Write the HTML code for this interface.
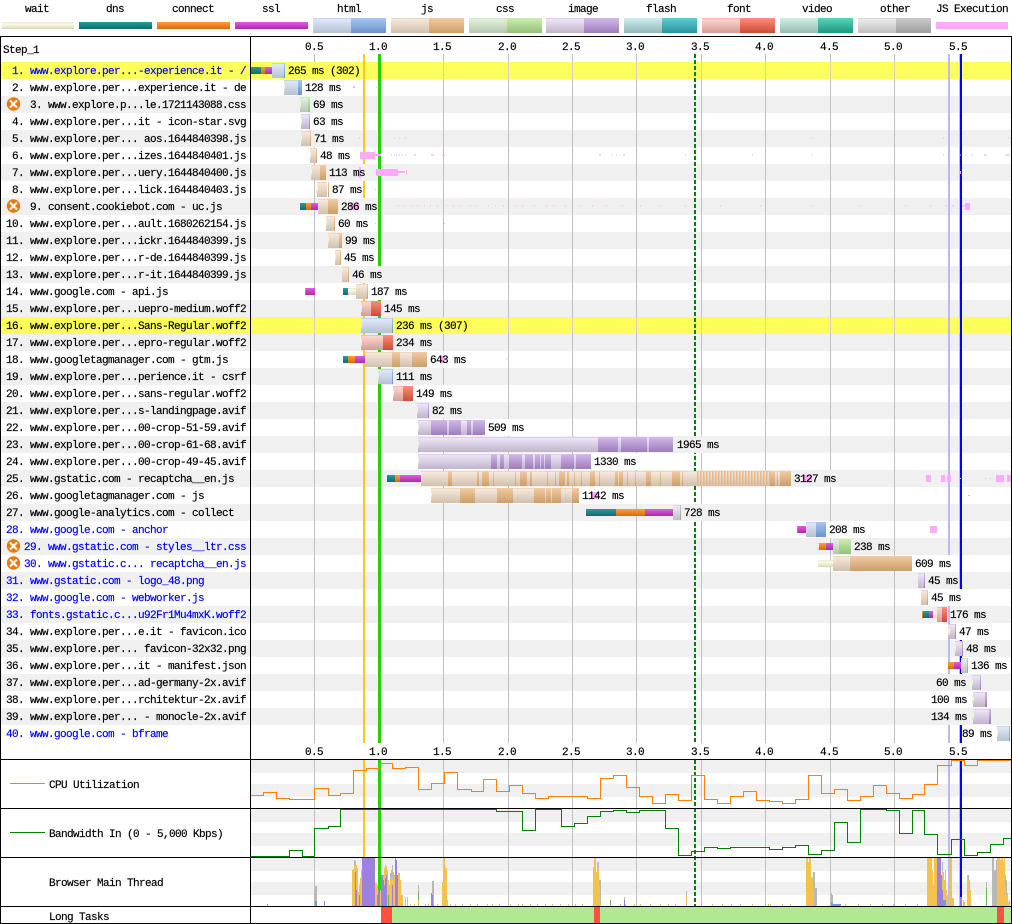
<!DOCTYPE html>
<html><head><meta charset="utf-8"><title>Waterfall</title>
<style>
html,body{margin:0;padding:0;background:#fff}
svg{display:block}
text{font-family:"Liberation Mono",monospace;font-size:11px;letter-spacing:-.6px;fill:#000;stroke:#000;stroke-width:.18px}
text.u{fill:#0000ff;stroke:#0000ff}
rect,path,polyline{shape-rendering:crispEdges}
.b{y:1px;height:15px}
.t{y:5px;height:7px}
.hl{fill:url(#hl)}.hd{fill:url(#hd)}.jl{fill:url(#jl)}.jd{fill:url(#jd)}.cl{fill:url(#cl)}.cd{fill:url(#cd)}
.il{fill:url(#il)}.id{fill:url(#id)}.fl{fill:url(#fl)}.fd{fill:url(#fd)}.ol{fill:url(#ol)}.od{fill:url(#od)}
.w{fill:url(#w)}.n{fill:url(#n)}.k{fill:url(#k)}.s{fill:url(#s)}
.lg{fill:#f0f0f0;y:0;height:17px}.lw{fill:#fff;y:0;height:17px}.ly{fill:#ffff5c;y:0;height:17px}
.p{fill:#ffaaf9}
.x{stroke:#fff;stroke-width:2;shape-rendering:auto}
</style></head><body>
<svg xmlns="http://www.w3.org/2000/svg" width="1012" height="924" viewBox="0 0 1012 924">
<defs>
<linearGradient id="w" x1="0" y1="0" x2="0" y2="1"><stop offset="0" stop-color="#e8e8c8"/><stop offset=".3" stop-color="#fbfbe6"/><stop offset="1" stop-color="#d8d8b8"/></linearGradient>
<linearGradient id="n" x1="0" y1="0" x2="0" y2="1"><stop offset="0" stop-color="#2a9a9c"/><stop offset="1" stop-color="#136a6c"/></linearGradient>
<linearGradient id="k" x1="0" y1="0" x2="0" y2="1"><stop offset="0" stop-color="#ff9c3a"/><stop offset="1" stop-color="#d76a0c"/></linearGradient>
<linearGradient id="s" x1="0" y1="0" x2="0" y2="1"><stop offset="0" stop-color="#e05ce0"/><stop offset="1" stop-color="#a82ca8"/></linearGradient>
<linearGradient id="hl" x1="0" y1="0" x2="0" y2="1"><stop offset="0" stop-color="#a9c4ea"/><stop offset=".07" stop-color="#dfe8f6"/><stop offset="1" stop-color="#b5c1d2"/></linearGradient>
<linearGradient id="hd" x1="0" y1="0" x2="0" y2="1"><stop offset="0" stop-color="#a8c6f0"/><stop offset="1" stop-color="#6d92c8"/></linearGradient>
<linearGradient id="jl" x1="0" y1="0" x2="0" y2="1"><stop offset="0" stop-color="#e8c8a0"/><stop offset=".07" stop-color="#f6e8da"/><stop offset="1" stop-color="#d2c0ae"/></linearGradient>
<linearGradient id="jd" x1="0" y1="0" x2="0" y2="1"><stop offset="0" stop-color="#f2cba2"/><stop offset="1" stop-color="#cd9d68"/></linearGradient>
<linearGradient id="cl" x1="0" y1="0" x2="0" y2="1"><stop offset="0" stop-color="#c0e4a8"/><stop offset=".07" stop-color="#e0f0dc"/><stop offset="1" stop-color="#b5c8b0"/></linearGradient>
<linearGradient id="cd" x1="0" y1="0" x2="0" y2="1"><stop offset="0" stop-color="#cceeb0"/><stop offset="1" stop-color="#92c076"/></linearGradient>
<linearGradient id="il" x1="0" y1="0" x2="0" y2="1"><stop offset="0" stop-color="#cdb5e8"/><stop offset=".07" stop-color="#eee5f7"/><stop offset="1" stop-color="#c0b4ca"/></linearGradient>
<linearGradient id="id" x1="0" y1="0" x2="0" y2="1"><stop offset="0" stop-color="#d2b8ec"/><stop offset="1" stop-color="#9c7cba"/></linearGradient>
<linearGradient id="fl" x1="0" y1="0" x2="0" y2="1"><stop offset="0" stop-color="#ff9c8c"/><stop offset=".07" stop-color="#ffd6cf"/><stop offset="1" stop-color="#d29e95"/></linearGradient>
<linearGradient id="fd" x1="0" y1="0" x2="0" y2="1"><stop offset="0" stop-color="#ff8e7a"/><stop offset="1" stop-color="#cb4a35"/></linearGradient>
<linearGradient id="ol" x1="0" y1="0" x2="0" y2="1"><stop offset="0" stop-color="#c8c8c8"/><stop offset=".07" stop-color="#ececec"/><stop offset="1" stop-color="#bebebe"/></linearGradient>
<linearGradient id="od" x1="0" y1="0" x2="0" y2="1"><stop offset="0" stop-color="#cacaca"/><stop offset="1" stop-color="#9e9e9e"/></linearGradient>
<linearGradient id="vl" x1="0" y1="0" x2="0" y2="1"><stop offset="0" stop-color="#cdeee6"/><stop offset="1" stop-color="#96bcb3"/></linearGradient>
<linearGradient id="vd" x1="0" y1="0" x2="0" y2="1"><stop offset="0" stop-color="#5ed2b6"/><stop offset="1" stop-color="#179880"/></linearGradient>
<linearGradient id="gl" x1="0" y1="0" x2="0" y2="1"><stop offset="0" stop-color="#cdeef0"/><stop offset="1" stop-color="#93b8b8"/></linearGradient>
<linearGradient id="gd" x1="0" y1="0" x2="0" y2="1"><stop offset="0" stop-color="#66ccd2"/><stop offset="1" stop-color="#27929f"/></linearGradient>
<pattern id="st" x="697" y="0" width="3" height="20" patternUnits="userSpaceOnUse"><rect width="1.5" height="20" fill="#e3b98c"/></pattern>
</defs>

<!-- legend -->
<g text-anchor="middle">
<text x="37" y="12" text-anchor="middle">wait</text><text x="115" y="12" text-anchor="middle">dns</text><text x="193" y="12" text-anchor="middle">connect</text><text x="271" y="12" text-anchor="middle">ssl</text><text x="349" y="12" text-anchor="middle">html</text><text x="427" y="12" text-anchor="middle">js</text><text x="505" y="12" text-anchor="middle">css</text><text x="583" y="12" text-anchor="middle">image</text><text x="661" y="12" text-anchor="middle">flash</text><text x="739" y="12" text-anchor="middle">font</text><text x="817" y="12" text-anchor="middle">video</text><text x="895" y="12" text-anchor="middle">other</text><text x="972" y="12" text-anchor="middle">JS Execution</text>
</g>
<rect x="2" y="22" width="72" height="7" fill="url(#w)"/>
<rect x="79" y="22" width="73" height="7" fill="url(#n)"/>
<rect x="157" y="22" width="73" height="7" fill="url(#k)"/>
<rect x="235" y="22" width="73" height="7" fill="url(#s)"/>
<rect x="313" y="18" width="38" height="15" fill="url(#hl)"/><rect x="351" y="18" width="35" height="15" fill="url(#hd)"/>
<rect x="391" y="18" width="38" height="15" fill="url(#jl)"/><rect x="429" y="18" width="35" height="15" fill="url(#jd)"/>
<rect x="469" y="18" width="38" height="15" fill="url(#cl)"/><rect x="507" y="18" width="35" height="15" fill="url(#cd)"/>
<rect x="546" y="18" width="38" height="15" fill="url(#il)"/><rect x="584" y="18" width="35" height="15" fill="url(#id)"/>
<rect x="624" y="18" width="38" height="15" fill="url(#gl)"/><rect x="662" y="18" width="35" height="15" fill="url(#gd)"/>
<rect x="702" y="18" width="38" height="15" fill="url(#fl)"/><rect x="740" y="18" width="35" height="15" fill="url(#fd)"/>
<rect x="780" y="18" width="38" height="15" fill="url(#vl)"/><rect x="818" y="18" width="35" height="15" fill="url(#vd)"/>
<rect x="858" y="18" width="38" height="15" fill="url(#ol)"/><rect x="896" y="18" width="35" height="15" fill="url(#od)"/>
<rect x="936" y="22" width="72" height="7" fill="#ffaaf9"/>

<!-- row backgrounds -->
<g fill="#f0f0f0">
<rect x="1" y="96" width="1010" height="17"/><rect x="1" y="130" width="1010" height="17"/><rect x="1" y="164" width="1010" height="17"/><rect x="1" y="198" width="1010" height="17"/><rect x="1" y="232" width="1010" height="17"/><rect x="1" y="266" width="1010" height="17"/><rect x="1" y="300" width="1010" height="17"/><rect x="1" y="334" width="1010" height="17"/><rect x="1" y="368" width="1010" height="17"/><rect x="1" y="402" width="1010" height="17"/><rect x="1" y="436" width="1010" height="17"/><rect x="1" y="470" width="1010" height="17"/><rect x="1" y="504" width="1010" height="17"/><rect x="1" y="538" width="1010" height="17"/><rect x="1" y="572" width="1010" height="17"/><rect x="1" y="606" width="1010" height="17"/><rect x="1" y="640" width="1010" height="17"/><rect x="1" y="674" width="1010" height="17"/><rect x="1" y="708" width="1010" height="17"/>
</g>
<rect x="1" y="62" width="1010" height="17" fill="#ffff5c"/><rect x="1" y="317" width="1010" height="17" fill="#ffff5c"/>

<!-- chart stripes -->
<g fill="#f0f0f0">
<rect x="251" y="760" width="760" height="13"/><rect x="251" y="784" width="760" height="13"/>
<rect x="251" y="809" width="760" height="13"/><rect x="251" y="833" width="760" height="13"/>
<rect x="251" y="858" width="760" height="13"/><rect x="251" y="882" width="760" height="13"/>
</g>

<!-- grid -->
<path fill="none" stroke="#c0c0c0" d="M314.5 54V743M379.5 54V743M443.5 54V743M508.5 54V743M572.5 54V743M636.5 54V743M701.5 54V743M765.5 54V743M830.5 54V743M894.5 54V743M959.5 54V743M314.5 760V906M379.5 760V906M443.5 760V906M508.5 760V906M572.5 760V906M636.5 760V906M701.5 760V906M765.5 760V906M830.5 760V906M894.5 760V906M959.5 760V906"/>
<path fill="none" stroke="#d4d4c4" d="M314.5 62v17M443.5 62v17M508.5 62v17M572.5 62v17M636.5 62v17M701.5 62v17M765.5 62v17M830.5 62v17M894.5 62v17M959.5 62v17M314.5 317v17M443.5 317v17M508.5 317v17M572.5 317v17M636.5 317v17M701.5 317v17M765.5 317v17M830.5 317v17M894.5 317v17M959.5 317v17"/>

<!-- marks -->
<g>
<rect x="363" y="54" width="2" height="689" fill="#ffc61e"/><rect x="363" y="760" width="2" height="146" fill="#ffc61e"/>
<rect x="378" y="54" width="3" height="689" fill="#28d000"/><rect x="378" y="760" width="3" height="146" fill="#28d000"/>
<rect x="948" y="54" width="2" height="689" fill="#b9b9f5"/><rect x="948" y="760" width="2" height="146" fill="#b9b9f5"/>
<rect x="960" y="54" width="2" height="689" fill="#0000ff"/><rect x="960" y="760" width="2" height="146" fill="#0000ff"/>
<path d="M695 54V743M695 760V906" stroke="#008000" stroke-width="2" stroke-dasharray="4 2" fill="none"/>
</g>

<!-- rows -->
<g transform="translate(0,62)"><rect class="t n" x="251" width="10"/><rect class="t k" x="261" width="4"/><rect class="t s" x="265" width="8"/><rect class="b hl" x="272" width="12"/><rect class="b hd" x="284" width="1"/><rect class="ly" x="288" width="72"/><text x="288" y="12">265 ms (302)</text></g>
<g transform="translate(0,79)"><rect class="b hl" x="284" width="14"/><rect class="b hd" x="298" width="4"/><rect class="t w" x="284" width="1"/><rect class="lw" x="305" width="37"/><text x="305" y="12">128 ms</text><rect class="p" x="353" y="7" width="2" height="2"/><rect class="p" x="376" y="8" width="1" height="1"/></g>
<g transform="translate(0,96)"><rect class="b cl" x="300" width="8"/><rect class="b cd" x="308" width="2"/><rect class="t w" x="300" width="1"/><rect class="lg" x="313" width="31"/><text x="313" y="12">69 ms</text></g>
<g transform="translate(0,113)"><rect class="b il" x="301" width="8"/><rect class="b id" x="309" width="1"/><rect class="t w" x="301" width="1"/><rect class="lw" x="313" width="31"/><text x="313" y="12">63 ms</text></g>
<g transform="translate(0,130)"><rect class="b jl" x="301" width="9"/><rect class="b jd" x="310" width="1"/><rect class="t w" x="301" width="1"/><rect class="lg" x="314" width="31"/><text x="314" y="12">71 ms</text><path stroke="#ffaaf9" d="M359 8h1M394 8h1M399 8h1M405 8h1M443 8h1M811 8h1M943 8h1M1008 8h1"/></g>
<g transform="translate(0,147)"><rect class="b jl" x="310" width="6"/><rect class="b jd" x="316" width="1"/><rect class="t w" x="310" width="1"/><rect class="lw" x="320" width="31"/><text x="320" y="12">48 ms</text><rect class="p" x="360" y="5" width="15" height="7"/><rect class="p" x="375" y="7" width="6" height="2"/><path stroke="#ffaaf9" d="M391 8h1M394 8h1M396 8h1M399 8h1M402 8h1M405 8h1M414 8h2M431 8h3M442 8h3M508 8h1M599 8h2M611 8h1M616 8h1M623 8h2M685 8h1M752 8h1M811 8h1M943 8h1M949 8h1M959 8h2M965 8h1M972 8h1M984 8h3M1005 8h5"/></g>
<g transform="translate(0,164)"><rect class="b jl" x="311" width="9"/><rect class="b jd" x="320" width="6"/><rect class="t w" x="311" width="1"/><rect class="lg" x="329" width="37"/><rect class="p" x="359" y="3" width="2" height="11"/><text x="329" y="12">113 ms</text><rect class="p" x="376" y="5" width="22" height="7"/><rect class="p" x="398" y="7" width="7" height="2"/><rect class="p" x="406" y="6" width="1" height="5"/><rect class="p" x="960" y="7" width="1" height="3"/></g>
<g transform="translate(0,181)"><rect class="b jl" x="317" width="10"/><rect class="b jd" x="328" width="1"/><rect class="t w" x="316" width="2"/><rect class="lw" x="332" width="31"/><text x="332" y="12">87 ms</text><rect class="p" x="375" y="8" width="1" height="1"/></g>
<g transform="translate(0,198)"><rect class="t n" x="300" width="6"/><rect class="t k" x="306" width="5"/><rect class="t s" x="311" width="8"/><rect class="b jl" x="318" width="10"/><rect class="b jd" x="328" width="10"/><rect class="lg" x="341" width="37"/><rect class="p" x="350" y="5" width="9" height="7"/><text x="341" y="12">286 ms</text><path stroke="#ffaaf9" d="M398 8h1M404 8h1M411 8h1M417 8h1M424 8h1M430 8h1M437 8h1M446 8h1M453 8h1M459 8h1M470 8h1M476 8h1M488 8h1M495 8h1M503 8h1M515 8h1M522 8h1M534 8h1M546 8h1M553 8h1M565 8h1M580 8h1M592 8h1M606 8h1M622 8h1M640 8h1M660 8h1M685 8h1M720 8h1M760 8h1M811 8h1M860 8h1M905 8h1M930 8h1M945 8h2M952 8h2M962 8h6"/><rect class="p" x="965" y="5" width="5" height="7"/></g>
<g transform="translate(0,215)"><rect class="b jl" x="326" width="8"/><rect class="b jd" x="334" width="1"/><rect class="t w" x="326" width="1"/><rect class="lw" x="338" width="31"/><text x="338" y="12">60 ms</text><rect class="p" x="375" y="8" width="1" height="1"/><rect class="p" x="444" y="8" width="1" height="1"/></g>
<g transform="translate(0,232)"><rect class="b jl" x="328" width="11"/><rect class="b jd" x="339" width="3"/><rect class="t w" x="328" width="1"/><rect class="lg" x="345" width="31"/><text x="345" y="12">99 ms</text></g>
<g transform="translate(0,249)"><rect class="b jl" x="335" width="5"/><rect class="b jd" x="340" width="1"/><rect class="t w" x="335" width="1"/><rect class="lw" x="344" width="31"/><text x="344" y="12">45 ms</text></g>
<g transform="translate(0,266)"><rect class="b jl" x="342" width="6"/><rect class="b jd" x="348" width="1"/><rect class="lg" x="352" width="31"/><text x="352" y="12">46 ms</text></g>
<g transform="translate(0,283)"><rect class="t k" x="305" width="1"/><rect class="t s" x="306" width="9"/><rect class="t n" x="343" width="5"/><rect class="t w" x="348" width="9"/><rect class="b jl" x="356" width="11"/><rect class="b jd" x="367" width="1"/><rect class="lw" x="371" width="37"/><text x="371" y="12">187 ms</text></g>
<g transform="translate(0,300)"><rect class="b fl" x="361" width="10"/><rect class="b fd" x="371" width="10"/><rect class="t w" x="361" width="1"/><rect class="lg" x="384" width="37"/><text x="384" y="12">145 ms</text></g>
<g transform="translate(0,317)"><rect class="b hl" x="361" width="31"/><rect class="b hd" x="392" width="1"/><rect class="t w" x="361" width="1"/><rect class="ly" x="396" width="73"/><text x="396" y="12">236 ms (307)</text></g>
<g transform="translate(0,334)"><rect class="b fl" x="361" width="22"/><rect class="b fd" x="383" width="10"/><rect class="t w" x="361" width="1"/><rect class="lg" x="396" width="37"/><text x="396" y="12">234 ms</text></g>
<g transform="translate(0,351)"><rect class="t n" x="343" width="5"/><rect class="t k" x="348" width="7"/><rect class="t s" x="355" width="11"/><rect class="b jl" x="365" width="27"/><rect class="b jd" x="392" width="8"/><rect class="b jl" x="400" width="12"/><rect class="b jd" x="412" width="15"/><rect class="lw" x="430" width="37"/><rect class="p" x="441" y="5" width="4" height="7"/><text x="430" y="12">643 ms</text><rect class="p" x="506" y="8" width="1" height="1"/></g>
<g transform="translate(0,368)"><rect class="b hl" x="378" width="14"/><rect class="b hd" x="392" width="1"/><rect class="t w" x="378" width="1"/><rect class="lg" x="396" width="37"/><text x="396" y="12">111 ms</text></g>
<g transform="translate(0,385)"><rect class="b fl" x="393" width="10"/><rect class="b fd" x="403" width="10"/><rect class="t w" x="393" width="1"/><rect class="lw" x="416" width="37"/><text x="416" y="12">149 ms</text></g>
<g transform="translate(0,402)"><rect class="b il" x="417" width="11"/><rect class="b id" x="428" width="1"/><rect class="t w" x="417" width="1"/><rect class="lg" x="432" width="31"/><text x="432" y="12">82 ms</text></g>
<g transform="translate(0,419)"><rect class="b il" x="418" width="67"/><rect class="b id" x="431" width="16"/><rect class="b id" x="449" width="12"/><rect class="b id" x="467" width="4"/><rect class="b id" x="473" width="12"/><rect class="t w" x="418" width="1"/><rect class="lw" x="488" width="37"/><text x="488" y="12">509 ms</text></g>
<g transform="translate(0,436)"><rect class="b il" x="418" width="255"/><rect class="b id" x="598" width="20"/><rect class="b id" x="621" width="26"/><rect class="b id" x="649" width="24"/><rect class="t w" x="418" width="1"/><rect class="lg" x="677" width="43"/><text x="677" y="12">1965 ms</text></g>
<g transform="translate(0,453)"><rect class="b il" x="418" width="173"/><rect class="b id" x="491" width="6"/><rect class="b id" x="500" width="4"/><rect class="b id" x="509" width="13"/><rect class="b id" x="525" width="8"/><rect class="b id" x="535" width="5"/><rect class="b id" x="541" width="3"/><rect class="b id" x="545" width="6"/><rect class="b id" x="561" width="13"/><rect class="b id" x="576" width="15"/><rect class="t w" x="418" width="1"/><rect class="lw" x="594" width="43"/><text x="594" y="12">1330 ms</text></g>
<g transform="translate(0,470)"><rect class="t n" x="387" width="8"/><rect class="t k" x="395" width="5"/><rect class="t s" x="400" width="22"/><rect class="b jl" x="421" width="370"/><rect class="b jd" x="448" width="4"/><rect class="b jd" x="477" width="2"/><rect class="b jd" x="482" width="7"/><rect class="b jd" x="493" width="1"/><rect class="b jd" x="515" width="1"/><rect class="b jd" x="520" width="7"/><rect class="b jd" x="530" width="2"/><rect class="b jd" x="547" width="1"/><rect class="b jd" x="555" width="1"/><rect class="b jd" x="559" width="6"/><rect class="b jd" x="567" width="2"/><rect class="b jd" x="574" width="1"/><rect class="b jd" x="581" width="1"/><rect class="b jd" x="590" width="5"/><rect class="b jd" x="599" width="1"/><rect class="b jd" x="615" width="3"/><rect class="b jd" x="619" width="4"/><rect class="b jd" x="627" width="1"/><rect class="b jd" x="635" width="1"/><rect class="b jd" x="646" width="5"/><rect class="b jd" x="660" width="1"/><rect class="b jd" x="672" width="8"/><rect class="b jd" x="682" width="1"/><rect class="b" x="697" width="73" fill="url(#st)" style="transform:translate(0,0)"/><rect class="b jd" x="770" width="5"/><rect class="b jd" x="777" width="1"/><rect class="b jd" x="780" width="11"/><rect class="lg" x="794" width="43"/><rect class="p" x="803" y="5" width="9" height="7"/><text x="794" y="12">3127 ms</text><rect class="p" x="926" y="5" width="5" height="7"/><rect class="p" x="941" y="5" width="4" height="7"/><rect class="p" x="947" y="5" width="4" height="7"/><rect class="p" x="960" y="8" width="1" height="1"/><rect class="p" x="985" y="8" width="1" height="1"/><rect class="p" x="990" y="8" width="1" height="1"/><rect class="p" x="996" y="5" width="8" height="7"/><rect class="p" x="1007" y="5" width="4" height="7"/></g>
<g transform="translate(0,487)"><rect class="b jl" x="431" width="148"/><rect class="b jd" x="460" width="15"/><rect class="b jd" x="497" width="16"/><rect class="b jd" x="534" width="11"/><rect class="b jd" x="546" width="5"/><rect class="b jd" x="552" width="9"/><rect class="b jd" x="572" width="7"/><rect class="t w" x="431" width="1"/><rect class="lw" x="582" width="43"/><rect class="p" x="591" y="5" width="8" height="7"/><text x="582" y="12">1142 ms</text><rect class="p" x="968" y="8" width="2" height="1"/></g>
<g transform="translate(0,504)"><rect class="t n" x="586" width="30"/><rect class="t k" x="616" width="29"/><rect class="t s" x="645" width="28"/><rect class="b ol" x="673" width="7"/><rect class="b od" x="680" width="1"/><rect class="lg" x="684" width="37"/><text x="684" y="12">728 ms</text></g>
<g transform="translate(0,521)"><rect class="t k" x="797" width="1"/><rect class="t s" x="798" width="8"/><rect class="b hl" x="806" width="10"/><rect class="b hd" x="816" width="10"/><rect class="lw" x="829" width="37"/><text x="829" y="12">208 ms</text><rect class="p" x="930" y="5" width="7" height="7"/></g>
<g transform="translate(0,538)"><rect class="t w" x="817" width="2"/><rect class="t k" x="819" width="7"/><rect class="t s" x="826" width="8"/><rect class="b cl" x="833" width="6"/><rect class="b cd" x="839" width="12"/><rect class="lg" x="854" width="37"/><text x="854" y="12">238 ms</text></g>
<g transform="translate(0,555)"><rect class="t w" x="818" width="16"/><rect class="b jl" x="833" width="17"/><rect class="b jd" x="850" width="62"/><rect class="lw" x="915" width="37"/><text x="915" y="12">609 ms</text></g>
<g transform="translate(0,572)"><rect class="b il" x="918" width="6"/><rect class="b id" x="924" width="1"/><rect class="lg" x="928" width="31"/><text x="928" y="12">45 ms</text></g>
<g transform="translate(0,589)"><rect class="b jl" x="921" width="6"/><rect class="b jd" x="927" width="1"/><rect class="lw" x="931" width="31"/><text x="931" y="12">45 ms</text></g>
<g transform="translate(0,606)"><rect class="t k" x="922" width="1"/><rect class="t n" x="923" width="6"/><rect class="t s" x="929" width="4"/><rect class="t w" x="933" width="4"/><rect class="b fl" x="937" width="5"/><rect class="b fd" x="942" width="5"/><rect class="lg" x="950" width="37"/><text x="950" y="12">176 ms</text></g>
<g transform="translate(0,623)"><rect class="b il" x="948" width="7"/><rect class="b id" x="955" width="1"/><rect class="t w" x="948" width="2"/><rect class="lw" x="959" width="31"/><text x="959" y="12">47 ms</text></g>
<g transform="translate(0,640)"><rect class="b il" x="955" width="7"/><rect class="b id" x="962" width="1"/><rect class="t w" x="955" width="1"/><rect class="lg" x="966" width="31"/><text x="966" y="12">48 ms</text></g>
<g transform="translate(0,657)"><rect class="t k" x="948" width="6"/><rect class="t s" x="954" width="7"/><rect class="b ol" x="961" width="6"/><rect class="b od" x="967" width="1"/><rect class="lw" x="971" width="37"/><text x="971" y="12">136 ms</text></g>
<g transform="translate(0,674)"><rect class="lg" x="936" width="31"/><text x="936" y="12">60 ms</text><rect class="b il" x="972" width="8"/><rect class="b id" x="980" width="1"/><rect class="t w" x="972" width="1"/></g>
<g transform="translate(0,691)"><rect class="lw" x="931" width="37"/><text x="931" y="12">100 ms</text><rect class="b il" x="973" width="12"/><rect class="b id" x="985" width="2"/><rect class="t w" x="972" width="2"/></g>
<g transform="translate(0,708)"><rect class="lg" x="931" width="37"/><text x="931" y="12">134 ms</text><rect class="b il" x="973" width="16"/><rect class="b id" x="989" width="2"/><rect class="t w" x="972" width="2"/></g>
<g transform="translate(0,725)"><rect class="lw" x="962" width="31"/><text x="962" y="12">89 ms</text><rect class="b hl" x="997" width="12"/><rect class="b hd" x="1009" width="1"/><rect class="t w" x="997" width="1"/></g>

<!-- left column cover -->
<g>
<rect x="1" y="37" width="249" height="25" fill="#fff"/>
<text x="3" y="53">Step_1</text>
<g>
<text class="u" x="12" y="74">1. www.explore.per...-experience.it - /</text>
<text x="12" y="91">2. www.explore.per...experience.it - de</text>
<text x="30" y="108">3. www.explore.p...le.1721143088.css</text>
<text x="12" y="125">4. www.explore.per...it - icon-star.svg</text>
<text x="12" y="142">5. www.explore.per... aos.1644840398.js</text>
<text x="12" y="159">6. www.explore.per...izes.1644840401.js</text>
<text x="12" y="176">7. www.explore.per...uery.1644840400.js</text>
<text x="12" y="193">8. www.explore.per...lick.1644840403.js</text>
<text x="30" y="210">9. consent.cookiebot.com - uc.js</text>
<text x="6" y="227">10. www.explore.per...ault.1680262154.js</text>
<text x="6" y="244">11. www.explore.per...ickr.1644840399.js</text>
<text x="6" y="261">12. www.explore.per...r-de.1644840399.js</text>
<text x="6" y="278">13. www.explore.per...r-it.1644840399.js</text>
<text x="6" y="295">14. www.google.com - api.js</text>
<text x="6" y="312">15. www.explore.per...uepro-medium.woff2</text>
<text x="6" y="329">16. www.explore.per...Sans-Regular.woff2</text>
<text x="6" y="346">17. www.explore.per...epro-regular.woff2</text>
<text x="6" y="363">18. www.googletagmanager.com - gtm.js</text>
<text x="6" y="380">19. www.explore.per...perience.it - csrf</text>
<text x="6" y="397">20. www.explore.per...sans-regular.woff2</text>
<text x="6" y="414">21. www.explore.per...s-landingpage.avif</text>
<text x="6" y="431">22. www.explore.per...00-crop-51-59.avif</text>
<text x="6" y="448">23. www.explore.per...00-crop-61-68.avif</text>
<text x="6" y="465">24. www.explore.per...00-crop-49-45.avif</text>
<text x="6" y="482">25. www.gstatic.com - recaptcha__en.js</text>
<text x="6" y="499">26. www.googletagmanager.com - js</text>
<text x="6" y="516">27. www.google-analytics.com - collect</text>
<text class="u" x="6" y="533">28. www.google.com - anchor</text>
<text class="u" x="24" y="550">29. www.gstatic.com - styles__ltr.css</text>
<text class="u" x="24" y="567">30. www.gstatic.c... recaptcha__en.js</text>
<text class="u" x="6" y="584">31. www.gstatic.com - logo_48.png</text>
<text class="u" x="6" y="601">32. www.google.com - webworker.js</text>
<text class="u" x="6" y="618">33. fonts.gstatic.c...u92Fr1Mu4mxK.woff2</text>
<text x="6" y="635">34. www.explore.per...e.it - favicon.ico</text>
<text x="6" y="652">35. www.explore.per... favicon-32x32.png</text>
<text x="6" y="669">36. www.explore.per...it - manifest.json</text>
<text x="6" y="686">37. www.explore.per...ad-germany-2x.avif</text>
<text x="6" y="703">38. www.explore.per...rchitektur-2x.avif</text>
<text x="6" y="720">39. www.explore.per... - monocle-2x.avif</text>
<text class="u" x="6" y="737">40. www.google.com - bframe</text>
</g>
<g>
<circle cx="13.5" cy="104" r="6.7" fill="#e87a12"/><path class="x" d="M10 100.5l7 7M17 100.5l-7 7"/>
<circle cx="13.5" cy="206" r="6.7" fill="#e87a12"/><path class="x" d="M10 202.5l7 7M17 202.5l-7 7"/>
<circle cx="13.5" cy="546" r="6.7" fill="#e87a12"/><path class="x" d="M10 542.5l7 7M17 542.5l-7 7"/>
<circle cx="13.5" cy="563" r="6.7" fill="#e87a12"/><path class="x" d="M10 559.5l7 7M17 559.5l-7 7"/>
</g>
</g>

<!-- axis labels -->
<g>
<text x="305" y="50">0.5</text><text x="369" y="50">1.0</text><text x="433" y="50">1.5</text><text x="498" y="50">2.0</text><text x="562" y="50">2.5</text><text x="626" y="50">3.0</text><text x="691" y="50">3.5</text><text x="755" y="50">4.0</text><text x="820" y="50">4.5</text><text x="884" y="50">5.0</text><text x="949" y="50">5.5</text>
<text x="305" y="755">0.5</text><text x="369" y="755">1.0</text><text x="433" y="755">1.5</text><text x="498" y="755">2.0</text><text x="562" y="755">2.5</text><text x="626" y="755">3.0</text><text x="691" y="755">3.5</text><text x="755" y="755">4.0</text><text x="820" y="755">4.5</text><text x="884" y="755">5.0</text><text x="949" y="755">5.5</text>
</g>

<!-- CPU -->
<polyline fill="none" stroke="#ff8000" points="251,795.5 263.5,795.5 263.5,792.5 276.5,792.5 276.5,798.5 289.5,798.5 289.5,799.5 314.5,799.5 314.5,788.5 328.5,788.5 328.5,795.5 340.5,795.5 340.5,793.5 353.5,793.5 353.5,770.5 366.5,770.5 366.5,768.5 379.5,768.5 379.5,763.5 392.5,763.5 392.5,768.5 405.5,768.5 405.5,767.5 418.5,767.5 418.5,789.5 431.5,789.5 431.5,783.5 444.5,783.5 444.5,772.5 457.5,772.5 457.5,789.5 471.5,789.5 471.5,791.5 483.5,791.5 483.5,779.5 496.5,779.5 496.5,791.5 509.5,791.5 509.5,785.5 522.5,785.5 522.5,793.5 535.5,793.5 535.5,798.5 548.5,798.5 548.5,796.5 587.5,796.5 587.5,798.5 600.5,798.5 600.5,778.5 613.5,778.5 613.5,775.5 626.5,775.5 626.5,787.5 639.5,787.5 639.5,796.5 652.5,796.5 652.5,803.5 665.5,803.5 665.5,794.5 678.5,794.5 678.5,800.5 691.5,800.5 691.5,775.5 704.5,775.5 704.5,799.5 717.5,799.5 717.5,803.5 730.5,803.5 730.5,796.5 743.5,796.5 743.5,791.5 756.5,791.5 756.5,800.5 769.5,800.5 769.5,801.5 782.5,801.5 782.5,803.5 795.5,803.5 795.5,799.5 808.5,799.5 808.5,775.5 821.5,775.5 821.5,793.5 834.5,793.5 834.5,789.5 847.5,789.5 847.5,800.5 860.5,800.5 860.5,796.5 873.5,796.5 873.5,785.5 886.5,785.5 886.5,793.5 899.5,793.5 899.5,798.5 912.5,798.5 912.5,794.5 924.5,794.5 924.5,784.5 937.5,784.5 937.5,765.5 951.5,765.5 951.5,760.5 964.5,760.5 964.5,765.5 977.5,765.5 977.5,760.5 1011,760.5"/>
<!-- BW -->
<polyline fill="none" stroke="#008000" points="251,856.5 289.5,856.5 289.5,850.5 302.5,850.5 302.5,856.5 314.5,856.5 314.5,828.5 328.5,828.5 328.5,826.5 340.5,826.5 340.5,809.5 496.5,809.5 496.5,811.5 522.5,811.5 522.5,830.5 535.5,830.5 535.5,809.5 561.5,809.5 561.5,826.5 574.5,826.5 574.5,823.5 587.5,823.5 587.5,816.5 600.5,816.5 600.5,811.5 613.5,811.5 613.5,810.5 626.5,810.5 626.5,812.5 639.5,812.5 639.5,810.5 665.5,810.5 665.5,828.5 678.5,828.5 678.5,855.5 691.5,855.5 691.5,851.5 704.5,851.5 704.5,847.5 717.5,847.5 717.5,848.5 730.5,848.5 730.5,847.5 769.5,847.5 769.5,849.5 782.5,849.5 782.5,847.5 795.5,847.5 795.5,845.5 808.5,845.5 808.5,854.5 821.5,854.5 821.5,850.5 834.5,850.5 834.5,822.5 847.5,822.5 847.5,842.5 860.5,842.5 860.5,809.5 886.5,809.5 886.5,810.5 899.5,810.5 899.5,833.5 912.5,833.5 912.5,810.5 924.5,810.5 924.5,834.5 937.5,834.5 937.5,854.5 951.5,854.5 951.5,839.5 964.5,839.5 964.5,855.5 977.5,855.5 977.5,852.5 990.5,852.5 990.5,844.5 1003.5,844.5 1003.5,838.5 1011,838.5"/>
<!-- main thread -->
<path fill="none" stroke="#b8b8b8" d="M354.5 860V906M355.5 861V906M390.5 873V906M391.5 870V906M392.5 865V906M393.5 872V906M400.5 880V906M418.5 885V906M432.5 881V906M433.5 881V906M314.5 892V906M315.5 886V906M316.5 886V906M598.5 862V906M599.5 880V906M600.5 880V906M624.5 897V906M686.5 891V906M813.5 872V906M814.5 872V906M815.5 888V906M816.5 888V906M831.5 893V906M832.5 895V906M942.5 862V906M986.5 882V906M992.5 858V906M993.5 858V906M994.5 870V906M995.5 870V906M996.5 860V906M1005.5 875V906M1006.5 880V906M968.5 875V906M352.5 875V906"/>
<path fill="none" stroke="#f2c14e" d="M352.5 870V906M353.5 869V906M354.5 865V906M355.5 865V906M356.5 865V906M357.5 868V906M358.5 892V906M359.5 885V906M360.5 878V906M361.5 870V906M375.5 883V906M376.5 883V906M377.5 885V906M380.5 890V906M381.5 885V906M382.5 880V906M383.5 875V906M384.5 868V906M385.5 865V906M386.5 866V906M387.5 870V906M388.5 880V906M389.5 885V906M390.5 880V906M391.5 878V906M392.5 880V906M393.5 878V906M394.5 875V906M395.5 880V906M396.5 878V906M397.5 875V906M398.5 873V906M399.5 873V906M400.5 880V906M401.5 895V906M402.5 895V906M405.5 897V906M407.5 897V906M418.5 898V906M442.5 882V906M443.5 858V906M444.5 858V906M445.5 868V906M446.5 868V906M447.5 900V906M593.5 867V906M594.5 858V906M595.5 858V906M596.5 872V906M597.5 862V906M598.5 868V906M599.5 885V906M600.5 902V906M806.5 858V906M807.5 858V906M808.5 862V906M809.5 858V906M810.5 858V906M811.5 877V906M812.5 877V906M813.5 890V906M927.5 858V906M928.5 858V906M929.5 858V906M930.5 858V906M931.5 858V906M932.5 870V906M933.5 885V906M934.5 858V906M935.5 858V906M936.5 858V906M937.5 880V906M942.5 872V906M943.5 872V906M944.5 880V906M945.5 870V906M946.5 890V906M947.5 895V906M949.5 893V906M950.5 858V906M951.5 858V906M952.5 898V906M953.5 898V906M963.5 900V906M964.5 902V906M967.5 875V906M968.5 880V906M969.5 880V906M970.5 890V906M997.5 858V906M998.5 858V906M999.5 858V906M1000.5 860V906M1001.5 858V906M1002.5 858V906M1003.5 862V906M1004.5 858V906M1005.5 888V906M1006.5 895V906M1007.5 893V906M1008.5 902V906M1009.5 900V906"/>
<path fill="none" stroke="#f2c14e" d="M410.5 904V906M414.5 904V906M425.5 904V906M428.5 904V906M437.5 904V906M450.5 904V906M455.5 904V906M462.5 904V906M470.5 904V906M477.5 904V906M487.5 904V906M492.5 904V906M499.5 904V906M510.5 904V906M518.5 904V906M522.5 904V906M530.5 904V906M537.5 904V906M545.5 904V906M552.5 904V906M560.5 904V906M568.5 904V906M575.5 904V906M582.5 904V906M610.5 904V906M620.5 904V906M625.5 904V906M634.5 904V906M640.5 904V906M650.5 904V906M660.5 904V906M668.5 904V906M675.5 904V906M686.5 895V906M701.5 904V906M712.5 904V906M722.5 904V906M731.5 904V906M740.5 904V906M752.5 904V906M768.5 904V906M770.5 904V906M782.5 904V906M790.5 904V906M845.5 904V906M858.5 904V906M870.5 904V906M882.5 904V906M893.5 904V906M905.5 904V906M917.5 904V906"/>
<rect x="362" y="858" width="13" height="48" fill="#9b82e0"/>
<path fill="none" stroke="#9b82e0" d="M355.5 872V906M381.5 875V906M382.5 875V906M383.5 880V906M384.5 885V906M385.5 878V906M386.5 875V906M392.5 885V906M395.5 858V906M396.5 860V906M397.5 875V906M431.5 895V906M432.5 895V906M324.5 901V906M624.5 900V906M937.5 858V906M938.5 858V906M939.5 858V906M940.5 858V906M941.5 875V906M942.5 890V906M960.5 897V906M961.5 897V906M356.5 890V906M359.5 895V906M377.5 895V906M378.5 890V906M379.5 892V906"/>
<path fill="none" stroke="#70a0e0" d="M267.5 904V906M315.5 901V906M316.5 901V906M831.5 903V906M832.5 903V906M833.5 904V906M834.5 904V906M835.5 904V906M836.5 904V906M837.5 904V906M838.5 904V906M839.5 904V906M840.5 904V906M943.5 900V906M944.5 900V906M945.5 900V906"/>
<path fill="none" stroke="#6fb350" d="M418.5 892V900M431.5 893V900M986.5 888V906M388.5 895V906M610.5 900V905"/>

<!-- long tasks -->
<rect x="381" y="907" width="11" height="16" fill="#ff5040"/>
<rect x="392" y="907" width="619" height="16" fill="#b2e990"/>
<rect x="594" y="907" width="6" height="16" fill="#ff5040"/>
<rect x="997" y="907" width="7" height="16" fill="#ff5040"/>

<!-- chart labels -->
<path d="M10 783.5H45" stroke="#ff8000" fill="none"/>
<text x="49" y="788">CPU Utilization</text>
<path d="M10 832.5H45" stroke="#008000" fill="none"/>
<text x="49" y="837">Bandwidth In (0 - 5,000 Kbps)</text>
<text x="49" y="886">Browser Main Thread</text>
<text x="49" y="920">Long Tasks</text>

<!-- frame -->
<g fill="#000">
<rect x="0" y="36" width="1012" height="1"/>
<rect x="0" y="36" width="1" height="888"/>
<rect x="1011" y="36" width="1" height="888"/>
<rect x="250" y="36" width="1" height="888"/>
<rect x="0" y="759" width="1012" height="1"/>
<rect x="0" y="808" width="1012" height="1"/>
<rect x="0" y="857" width="1012" height="1"/>
<rect x="0" y="906" width="1012" height="1"/>
<rect x="0" y="923" width="1012" height="1"/>
</g>
</svg>
</body></html>
